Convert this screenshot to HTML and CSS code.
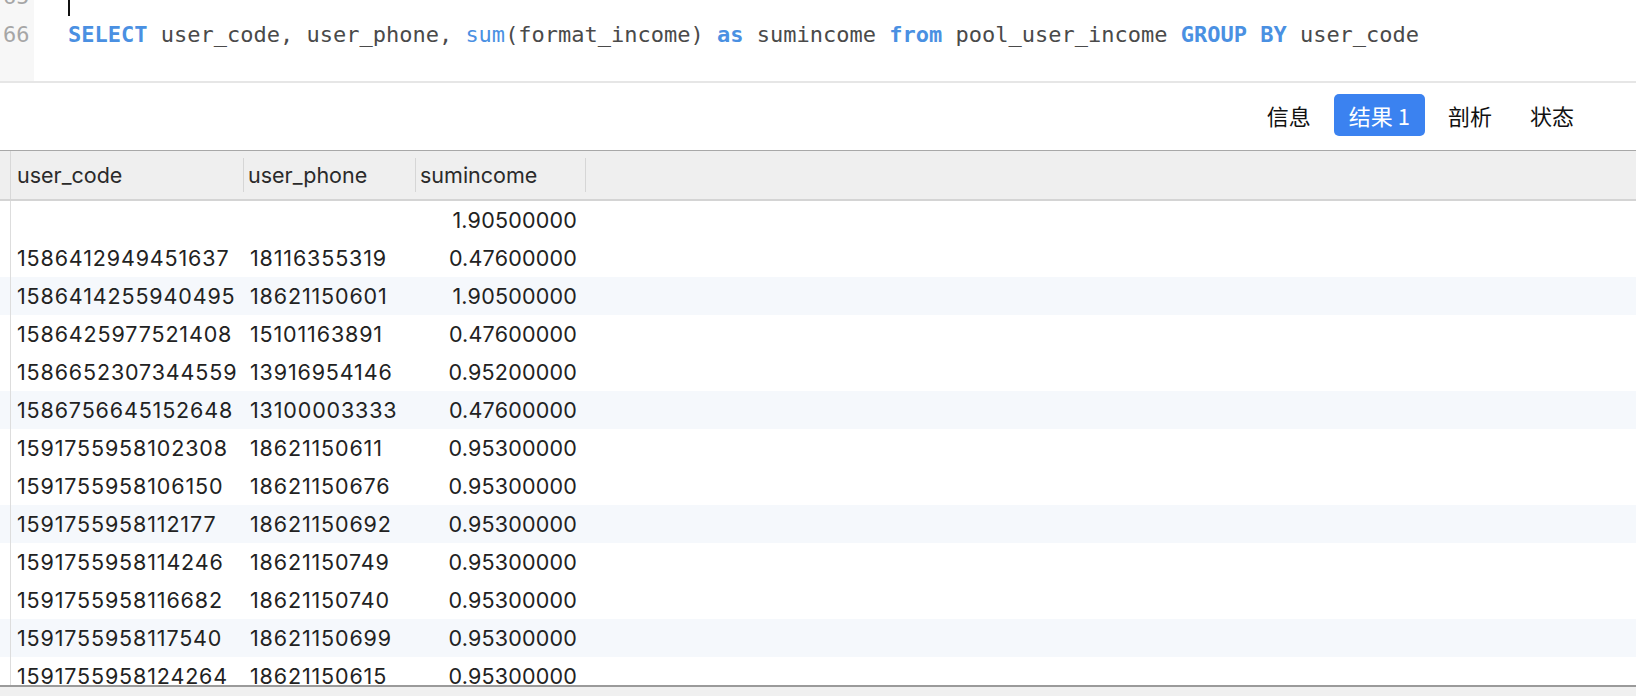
FILE: index.html
```html
<!DOCTYPE html>
<html lang="zh">
<head>
<meta charset="utf-8">
<title>Query</title>
<link rel="stylesheet" href="styles.css">
</head>
<body>
<div class="app">
  <div class="editor">
    <div class="gutter">
      <div class="ln">65</div>
      <div class="ln">66</div>
    </div>
    <div class="code">
      <div class="line"><span class="caret"></span></div>
      <div class="line"><span class="kw">SELECT</span> user_code, user_phone, <span class="fn">sum</span>(format_income) <span class="kw">as</span> sumincome <span class="kw">from</span> pool_user_income <span class="kw">GROUP</span> <span class="kw">BY</span> user_code</div>
    </div>
  </div>

  <div class="tabs">
    <div class="tab">信息</div>
    <div class="tab active">结果 1</div>
    <div class="tab">剖析</div>
    <div class="tab">状态</div>
  </div>

  <div class="grid">
    <div class="row head">
      <div class="lead"></div>
      <div class="hc">user_code</div>
      <div class="hc sep">user_phone</div>
      <div class="hc sep">sumincome</div>
      <div class="hc sep"></div>
    </div>
    <div class="body">
      <div class="row"><div class="lead"></div><div class="c"></div><div class="c c2"></div><div class="c num">1.90500000</div><div class="c"></div></div>
      <div class="row"><div class="lead"></div><div class="c">1586412949451637</div><div class="c c2">18116355319</div><div class="c num">0.47600000</div><div class="c"></div></div>
      <div class="row alt"><div class="lead"></div><div class="c">1586414255940495</div><div class="c c2">18621150601</div><div class="c num">1.90500000</div><div class="c"></div></div>
      <div class="row"><div class="lead"></div><div class="c">1586425977521408</div><div class="c c2">15101163891</div><div class="c num">0.47600000</div><div class="c"></div></div>
      <div class="row"><div class="lead"></div><div class="c">1586652307344559</div><div class="c c2">13916954146</div><div class="c num">0.95200000</div><div class="c"></div></div>
      <div class="row alt"><div class="lead"></div><div class="c">1586756645152648</div><div class="c c2">13100003333</div><div class="c num">0.47600000</div><div class="c"></div></div>
      <div class="row"><div class="lead"></div><div class="c">1591755958102308</div><div class="c c2">18621150611</div><div class="c num">0.95300000</div><div class="c"></div></div>
      <div class="row"><div class="lead"></div><div class="c">1591755958106150</div><div class="c c2">18621150676</div><div class="c num">0.95300000</div><div class="c"></div></div>
      <div class="row alt"><div class="lead"></div><div class="c">1591755958112177</div><div class="c c2">18621150692</div><div class="c num">0.95300000</div><div class="c"></div></div>
      <div class="row"><div class="lead"></div><div class="c">1591755958114246</div><div class="c c2">18621150749</div><div class="c num">0.95300000</div><div class="c"></div></div>
      <div class="row"><div class="lead"></div><div class="c">1591755958116682</div><div class="c c2">18621150740</div><div class="c num">0.95300000</div><div class="c"></div></div>
      <div class="row alt"><div class="lead"></div><div class="c">1591755958117540</div><div class="c c2">18621150699</div><div class="c num">0.95300000</div><div class="c"></div></div>
      <div class="row"><div class="lead"></div><div class="c">1591755958124264</div><div class="c c2">18621150615</div><div class="c num">0.95300000</div><div class="c"></div></div>
    </div>
  </div>
  <div class="footer"></div>
</div>
</body>
</html>
```

FILE: styles.css
```css
html, body {
  margin: 0;
  padding: 0;
  background: #ffffff;
}
.app {
  width: 1636px;
  height: 696px;
  overflow: hidden;
  display: flex;
  flex-direction: column;
}

/* Editor */
.editor {
  height: 81px;
  flex: none;
  display: flex;
  overflow: hidden;
  border-bottom: 2px solid #e6e6e6;
  font-family: "DejaVu Sans Mono", monospace;
  font-size: 22px;
}
.gutter {
  width: 34px;
  flex: none;
  background: #f7f7f7;
  margin-top: -22px;
}
.ln {
  height: 38px;
  line-height: 38px;
  color: #a6a6a6;
  padding-left: 3px;
}
.code {
  margin-top: -22px;
  padding-left: 34px;
  color: #4a4a4a;
}
.line {
  height: 38px;
  line-height: 38px;
  white-space: pre;
}
.caret {
  display: inline-block;
  width: 2px;
  height: 36px;
  background: #111;
  vertical-align: middle;
}
.kw {
  color: #4a90e2;
  font-weight: bold;
}
.fn {
  color: #4a90e2;
}

/* Tabs */
.tabs {
  height: 68px;
  flex: none;
  box-sizing: border-box;
  display: flex;
  justify-content: flex-end;
  align-items: center;
  gap: 8px;
  padding-right: 47px;
  border-bottom: 1px solid #a8a8a8;
  font-family: "Noto Sans CJK SC", sans-serif;
  font-size: 22px;
  color: #111;
}
.tab {
  height: 42px;
  line-height: 42px;
  padding: 0 15px;
  border-radius: 5px;
  margin-top: -3px;
  white-space: nowrap;
}
.tab.active {
  background: #3b82f0;
  color: #ffffff;
}

/* Grid */
.grid {
  height: 534px;
  flex: none;
  overflow: hidden;
  font-family: "Inter", "Noto Sans CJK SC", sans-serif;
  font-size: 21.5px;
  color: #222;
}
.row {
  display: grid;
  grid-template-columns: 11px 232px 172px 170px 1fr;
  height: 38px;
  align-items: center;
}
.row.alt {
  background: #f5f8fc;
}
.lead {
  height: 100%;
  border-right: 1px solid #dddddd;
  box-sizing: border-box;
}
.head {
  height: 48px;
  background: #efefef;
  border-bottom: 2px solid #d4d4d4;
  color: #2a2a2a;
}
.head .lead {
  border-right-color: #d8d8d8;
}
.hc {
  height: 34px;
  line-height: 34px;
  padding-left: 6px;
  white-space: nowrap;
}
.hc.sep {
  border-left: 1px solid #d6d6d6;
  padding-left: 4px;
}
.c {
  padding-left: 6px;
  white-space: nowrap;
  line-height: 38px;
  letter-spacing: 0.85px;
}
.c2 {
  padding-left: 7px;
}
.num {
  text-align: right;
  padding-right: 8px;
  letter-spacing: 0.2px;
}

.footer {
  flex: 1;
  border-top: 2px solid #9a9a9a;
  background: #f0f0f0;
}
```
